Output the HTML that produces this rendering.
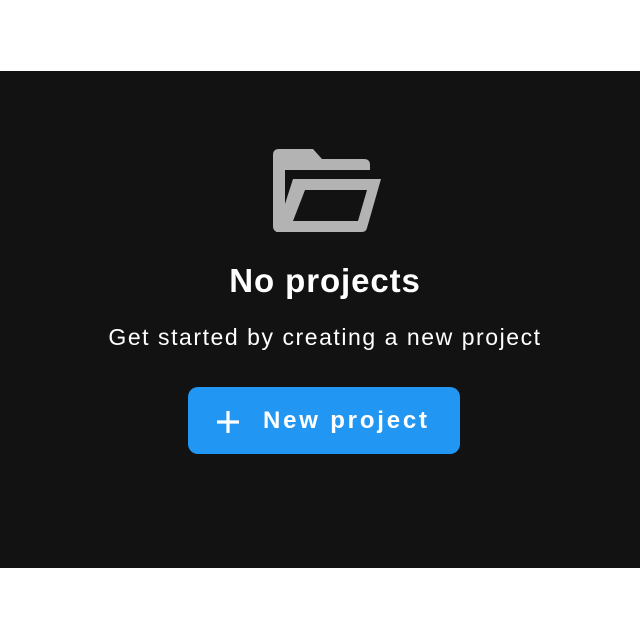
<!DOCTYPE html>
<html><head><style>
body{margin:0;width:640px;height:640px;background:#fff;font-family:"Liberation Sans",sans-serif;position:relative;overflow:hidden}
.dark{position:absolute;left:0;top:71px;width:640px;height:497px;background:#121212}
.t{position:absolute;left:5px;width:640px;text-align:center;color:#fff}
.btn{position:absolute;left:188px;top:387px;width:272px;height:67px;background:#2196f3;border-radius:10px}
</style></head><body>
<div class="dark"></div>
<svg style="position:absolute;left:0;top:0" width="640" height="640">
<path fill="#b3b3b3" d="M279,149 H313 L322,159 H364 Q370,159 370,165 V170 H285 V226 L283,232 H279 Q273,232 273,226 V155 Q273,149 279,149 Z"/>
<path fill="#b3b3b3" fill-rule="evenodd" d="M293,179 H381 L367,228 Q366,232 362,232 H276 Z M305,190 L293,221 H358 L367,190 Z"/>
</svg>
<div class="t" style="top:262px;font-size:33px;font-weight:bold;letter-spacing:0.9px">No projects</div>
<div class="t" style="top:324px;font-size:23px;letter-spacing:1.55px">Get started by creating a new project</div>
<div class="btn"></div>
<svg style="position:absolute;left:215px;top:409px" width="26" height="26"><path d="M13,2V24M2,13H24" stroke="#fff" stroke-width="3.2"/></svg>
<div style="position:absolute;left:263px;top:407px;color:#fff;font-size:24px;font-weight:bold;letter-spacing:2.8px">New project</div>
</body></html>
